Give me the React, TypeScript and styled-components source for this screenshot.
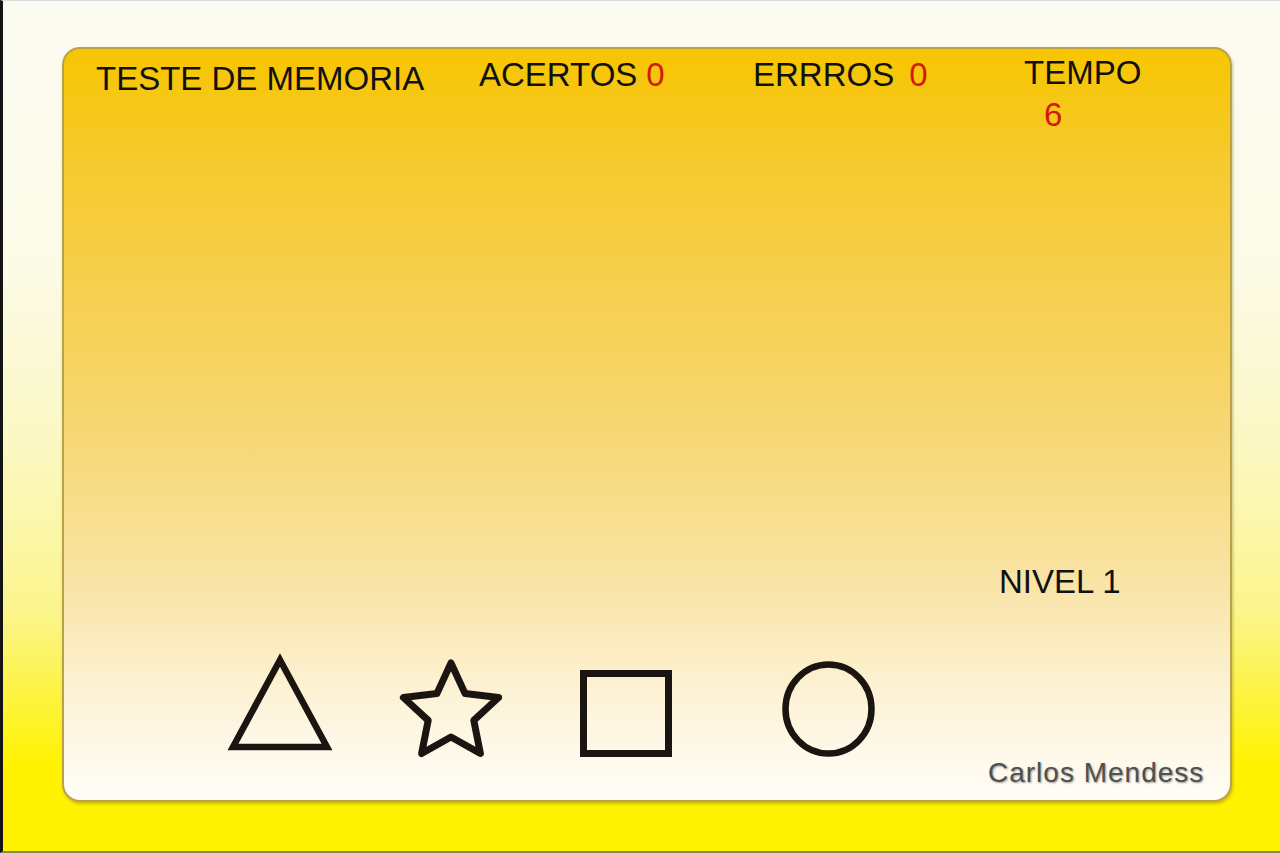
import styled, { createGlobalStyle } from 'styled-components';

const GlobalStyle = createGlobalStyle`
  * {
    box-sizing: border-box;
  }
  body {
    margin: 0;
    font-family: 'Liberation Sans', Arial, sans-serif;
  }
`;

const Page = styled.div`
  height: 853px;
  padding: 46px 0 0 59px;
  border-left: 3px solid #141414;
  border-top: 1px solid #dcdcdc;
  border-bottom: 2px solid #8c8a4a;
  background: linear-gradient(
    to bottom,
    #fbfbf3 0%,
    #fcfbe8 30%,
    #fbf8c4 52%,
    #fbf58c 72%,
    #fff200 90%,
    #fff200 100%
  );
`;

const Card = styled.div`
  width: 1170px;
  height: 755px;
  display: flex;
  flex-direction: column;
  padding: 9px 0 13px 0;
  border: 2px solid #b9a249;
  border-radius: 18px;
  box-shadow: 1px 2px 3px rgba(110, 95, 0, 0.35);
  background: linear-gradient(
    to bottom,
    #f7c500 0%,
    #f6ca2e 15%,
    #f6d467 45%,
    #f9e3a2 70%,
    #fdf4dc 88%,
    #fffdf7 100%
  );
`;

const Header = styled.div`
  display: grid;
  grid-template-columns: 383px 274px 271px auto;
  padding-left: 32px;
  align-items: start;
`;

const Stat = styled.div<{ $shift?: number }>`
  display: flex;
  flex-direction: column;
  gap: 9px;
  margin-top: ${(p) => p.$shift ?? 0}px;
  font-size: 33px;
  line-height: 33px;
  color: #111;
  white-space: nowrap;
`;

const Value = styled.span<{ $gap?: number; $indent?: number }>`
  color: #d11a0c;
  margin-left: ${(p) => p.$gap ?? 0}px;
  padding-left: ${(p) => p.$indent ?? 0}px;
`;

const Spacer = styled.div`
  flex: 1;
`;

const Bottom = styled.div`
  display: grid;
  grid-template-columns: 924px 1fr;
  align-items: end;
`;

const ShapesRow = styled.div`
  display: flex;
  align-items: flex-end;
  padding-left: 164px;
`;

const ShapeButton = styled.button<{ $left: number; $bottom: number }>`
  display: block;
  padding: 0;
  border: none;
  background: none;
  cursor: pointer;
  margin-left: ${(p) => p.$left}px;
  margin-bottom: ${(p) => p.$bottom}px;

  svg {
    display: block;
    overflow: visible;
  }
`;

const Side = styled.div`
  display: flex;
  flex-direction: column;
  gap: 161px;
`;

const Level = styled.div`
  padding-left: 11px;
  font-size: 33px;
  line-height: 33px;
  color: #111;
`;

const Author = styled.div`
  font-size: 28px;
  line-height: 28px;
  letter-spacing: 1px;
  color: #505050;
  text-shadow: 1px 1px 2px rgba(0, 0, 0, 0.4);
`;

const INK = '#1b1511';

function starPoints(cx: number, cy: number, R: number, r: number) {
  const pts: string[] = [];
  for (let i = 0; i < 10; i++) {
    const rad = i % 2 === 0 ? R : r;
    const a = (Math.PI / 5) * i - Math.PI / 2;
    pts.push(`${(cx + rad * Math.cos(a)).toFixed(1)},${(cy + rad * Math.sin(a)).toFixed(1)}`);
  }
  return pts.join(' ');
}

function App() {
  return (
    <>
      <GlobalStyle />
      <Page>
        <Card>
          <Header>
            <Stat $shift={4}>TESTE DE MEMORIA</Stat>
            <Stat>
              <span>
                ACERTOS<Value $gap={9}>0</Value>
              </span>
            </Stat>
            <Stat>
              <span>
                ERRROS<Value $gap={15}>0</Value>
              </span>
            </Stat>
            <Stat $shift={-2}>
              <span>TEMPO</span>
              <Value $indent={20}>6</Value>
            </Stat>
          </Header>

          <Spacer />

          <Bottom>
            <ShapesRow>
              <ShapeButton $left={0} $bottom={36} aria-label="triangulo">
                <svg width="104" height="96" viewBox="0 0 104 96">
                  <polygon
                    points="52,5 5,92 99,92"
                    fill="none"
                    stroke={INK}
                    strokeWidth="6.5"
                  />
                </svg>
              </ShapeButton>
              <ShapeButton $left={71} $bottom={27} aria-label="estrela">
                <svg width="96" height="100" viewBox="0 0 96 100">
                  <polygon
                    points={starPoints(48, 53, 50, 24)}
                    fill="none"
                    stroke={INK}
                    strokeWidth="7"
                    strokeLinejoin="round"
                  />
                </svg>
              </ShapeButton>
              <ShapeButton $left={81} $bottom={30} aria-label="quadrado">
                <svg width="92" height="87" viewBox="0 0 92 87">
                  <rect
                    x="3.5"
                    y="3.5"
                    width="85"
                    height="80"
                    fill="none"
                    stroke={INK}
                    strokeWidth="7"
                  />
                </svg>
              </ShapeButton>
              <ShapeButton $left={110} $bottom={30} aria-label="circulo">
                <svg width="93" height="96" viewBox="0 0 93 96">
                  <ellipse
                    cx="46.5"
                    cy="48"
                    rx="43"
                    ry="44.5"
                    fill="none"
                    stroke={INK}
                    strokeWidth="6.5"
                  />
                </svg>
              </ShapeButton>
            </ShapesRow>

            <Side>
              <Level>NIVEL 1</Level>
              <Author>Carlos Mendess</Author>
            </Side>
          </Bottom>
        </Card>
      </Page>
    </>
  );
}

export default App;
